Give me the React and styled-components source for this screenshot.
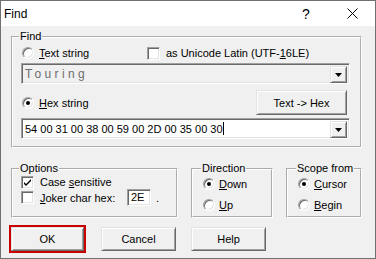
import React from 'react';
import styled, { createGlobalStyle } from 'styled-components';

const GlobalStyle = createGlobalStyle`
  html, body { margin: 0; padding: 0; background: #ffffff; }
  body { font-family: "Liberation Sans", Arial, sans-serif; }
  *, *::before, *::after { box-sizing: border-box; }
`;

const Window = styled.div`
  width: 376px;
  height: 259px;
  border: 1px solid #707070;
  background: #f0f0f0;
  display: flex;
  flex-direction: column;
  font: 11px "Liberation Sans", Arial, sans-serif;
  color: #000;
  overflow: hidden;
`;

const TitleBar = styled.div`
  height: 25px;
  flex-shrink: 0;
  background: #ffffff;
  display: flex;
  align-items: center;
`;

const Title = styled.div`
  flex: 1;
  padding-left: 3px;
  font-size: 12px;
`;

const TitleButton = styled.div`
  width: 46px;
  height: 25px;
  display: flex;
  align-items: center;
  justify-content: center;
  font-size: 14px;
`;

const Body = styled.div`
  flex: 1;
  display: flex;
  flex-direction: column;
  padding: 4px 13px 0 10px;
`;

const Group = styled.fieldset`
  margin: 0;
  min-width: 0;
  border: 2px groove #ffffff;
  padding: ${(p) => p.$pad || '2px 10px 7px 8px'};
  width: ${(p) => (p.$w ? `${p.$w}px` : 'auto')};
  height: ${(p) => (p.$h ? `${p.$h}px` : 'auto')};
  display: flex;
  flex-direction: column;
`;

const Legend = styled.legend`
  padding: 0 1px;
  margin-left: ${(p) => p.$ml ?? -2}px;
  line-height: 13px;
  font-size: 11px;
`;

const Row = styled.div`
  display: flex;
  align-items: center;
  height: ${(p) => p.$h}px;
  margin-top: ${(p) => p.$mt || 0}px;
`;

const Choice = styled.div`
  display: flex;
  align-items: center;
  gap: ${(p) => p.$gap ?? 6}px;
  width: ${(p) => (p.$w ? `${p.$w}px` : 'auto')};
  white-space: nowrap;
`;

const Radio = styled.span`
  width: 12px;
  height: 12px;
  margin-left: ${(p) => p.$ml || 0}px;
  flex-shrink: 0;
  border-radius: 50%;
  background: #ffffff;
  border: 1px solid;
  border-color: #a0a0a0 #ffffff #ffffff #a0a0a0;
  box-shadow: inset 1px 1px 0 #696969, inset -1px -1px 0 #e3e3e3;
  display: flex;
  align-items: center;
  justify-content: center;
  &::after {
    content: '';
    width: 4px;
    height: 4px;
    border-radius: 50%;
    background: ${(p) => (p.$on ? '#000' : 'transparent')};
  }
`;

const Check = styled.span`
  width: 13px;
  height: 13px;
  flex-shrink: 0;
  background: #ffffff;
  border: 1px solid;
  border-color: #a0a0a0 #ffffff #ffffff #a0a0a0;
  box-shadow: inset 1px 1px 0 #696969, inset -1px -1px 0 #e3e3e3;
  display: flex;
  align-items: center;
  justify-content: center;
`;

const Label = styled.span`
  width: ${(p) => (p.$w ? `${p.$w}px` : 'auto')};
  flex-shrink: 0;
`;

const Combo = styled.div`
  display: flex;
  height: 21px;
  width: 100%;
  padding: 2px;
  border: 1px solid;
  border-color: #a0a0a0 #ffffff #ffffff #a0a0a0;
  box-shadow: inset 1px 1px 0 #696969, inset -1px -1px 0 #e3e3e3;
  background: ${(p) => (p.$disabled ? '#f0f0f0' : '#ffffff')};
`;

const ComboText = styled.div`
  flex: 1;
  display: flex;
  align-items: center;
  padding-left: 1px;
  white-space: nowrap;
  overflow: hidden;
  color: ${(p) => (p.$disabled ? '#6d6d6d' : '#000')};
  letter-spacing: ${(p) => (p.$spaced ? '3.4px' : '0')};
  font-size: ${(p) => (p.$spaced ? '12px' : '11px')};
`;

const Caret = styled.span`
  display: inline-block;
  width: 1px;
  height: 13px;
  background: #000;
`;

const RaisedBase = styled.div`
  display: flex;
  align-items: center;
  justify-content: center;
  background: #f0f0f0;
  border: 1px solid;
  border-color: #e3e3e3 #696969 #696969 #e3e3e3;
  box-shadow: inset 1px 1px 0 #ffffff, inset -1px -1px 0 #a0a0a0;
`;

const DropButton = styled(RaisedBase)`
  width: 17px;
  height: 17px;
  flex-shrink: 0;
`;

const PushButton = styled(RaisedBase)`
  width: ${(p) => p.$w}px;
  height: ${(p) => p.$h || 24}px;
  margin-left: ${(p) => (p.$right ? 'auto' : '0')};
  margin-right: ${(p) => p.$mr || 0}px;
  font-size: 11px;
`;

const GroupRow = styled.div`
  display: flex;
  gap: 13px;
  margin-top: 14px;
`;

const SmallEdit = styled.div`
  width: 24px;
  height: 17px;
  padding: 1px 0 0 3px;
  background: #ffffff;
  border: 1px solid;
  border-color: #a0a0a0 #ffffff #ffffff #a0a0a0;
  box-shadow: inset 1px 1px 0 #696969, inset -1px -1px 0 #e3e3e3;
  line-height: 13px;
`;

const Dot = styled.span`
  margin-left: 5px;
`;

const Stack = styled.div`
  display: flex;
  flex-direction: column;
  gap: ${(p) => p.$gap || 0}px;
  padding-top: ${(p) => p.$pt || 0}px;
`;

const ButtonRow = styled.div`
  display: flex;
  align-items: center;
  gap: 15px;
  margin-top: 7px;
  margin-left: -2px;
`;

const DefaultFrame = styled.div`
  border: 2px solid #c80000;
  display: flex;
`;

const Arrow = () => (
  <svg width="7" height="4" viewBox="0 0 7 4">
    <polygon points="0,0 7,0 3.5,4" fill="#000" />
  </svg>
);

const Tick = () => (
  <svg width="9" height="9" viewBox="0 0 9 9">
    <path d="M1 4 L3 6 L8 1 L8 3 L3 8 L1 6 Z" fill="#000" />
  </svg>
);

const CloseIcon = () => (
  <svg width="11" height="11" viewBox="0 0 11 11">
    <path d="M0.5 0.5 L10.5 10.5 M10.5 0.5 L0.5 10.5" stroke="#000" strokeWidth="1" fill="none" />
  </svg>
);

export default function App() {
  return (
    <>
      <GlobalStyle />
      <Window>
        <TitleBar>
          <Title>Find</Title>
          <TitleButton>?</TitleButton>
          <TitleButton>
            <CloseIcon />
          </TitleButton>
        </TitleBar>
        <Body>
          <Group>
            <Legend>Find</Legend>
            <Row $h={16}>
              <Choice $w={126} $gap={5}>
                <Radio $ml={1} />
                <Label>
                  <u>T</u>ext string
                </Label>
              </Choice>
              <Choice>
                <Check />
                <Label>
                  as Unicode Latin (UTF-<u>1</u>6LE)
                </Label>
              </Choice>
            </Row>
            <Row $h={21} $mt={2}>
              <Combo $disabled>
                <ComboText $disabled $spaced>
                  Touring
                </ComboText>
                <DropButton>
                  <Arrow />
                </DropButton>
              </Combo>
            </Row>
            <Row $h={25} $mt={6}>
              <Choice $gap={5}>
                <Radio $ml={1} $on />
                <Label>
                  <u>H</u>ex string
                </Label>
              </Choice>
              <PushButton $w={91} $h={25} $right $mr={3}>
                Text -&gt; Hex
              </PushButton>
            </Row>
            <Row $h={21} $mt={3}>
              <Combo>
                <ComboText>
                  54 00 31 00 38 00 59 00 2D 00 35 00 30
                  <Caret />
                </ComboText>
                <DropButton>
                  <Arrow />
                </DropButton>
              </Combo>
            </Row>
          </Group>

          <GroupRow>
            <Group $w={167} $h={56} $pad="0 6px 0 8px">
              <Legend>Options</Legend>
              <Row $h={14}>
                <Choice>
                  <Check>
                    <Tick />
                  </Check>
                  <Label>
                    Case <u>s</u>ensitive
                  </Label>
                </Choice>
              </Row>
              <Row $h={17}>
                <Choice $gap={6}>
                  <Check />
                  <Label $w={87}>
                    <u>J</u>oker char hex:
                  </Label>
                </Choice>
                <SmallEdit>2E</SmallEdit>
                <Dot>.</Dot>
              </Row>
            </Group>

            <Group $w={82} $h={56} $pad="0 6px 0 10px">
              <Legend>Direction</Legend>
              <Stack $gap={5} $pt={1}>
                <Row $h={16}>
                  <Choice $gap={4}>
                    <Radio $on />
                    <Label>
                      <u>D</u>own
                    </Label>
                  </Choice>
                </Row>
                <Row $h={16}>
                  <Choice $gap={4}>
                    <Radio />
                    <Label>
                      <u>U</u>p
                    </Label>
                  </Choice>
                </Row>
              </Stack>
            </Group>

            <Group $w={76} $h={56} $pad="0 4px 0 10px">
              <Legend>Scope from</Legend>
              <Stack $gap={5} $pt={1}>
                <Row $h={16}>
                  <Choice $gap={4}>
                    <Radio $on />
                    <Label>
                      <u>C</u>ursor
                    </Label>
                  </Choice>
                </Row>
                <Row $h={16}>
                  <Choice $gap={4}>
                    <Radio />
                    <Label>
                      <u>B</u>egin
                    </Label>
                  </Choice>
                </Row>
              </Stack>
            </Group>
          </GroupRow>

          <ButtonRow>
            <DefaultFrame>
              <PushButton $w={73}>OK</PushButton>
            </DefaultFrame>
            <PushButton $w={75}>Cancel</PushButton>
            <PushButton $w={75}>Help</PushButton>
          </ButtonRow>
        </Body>
      </Window>
    </>
  );
}
